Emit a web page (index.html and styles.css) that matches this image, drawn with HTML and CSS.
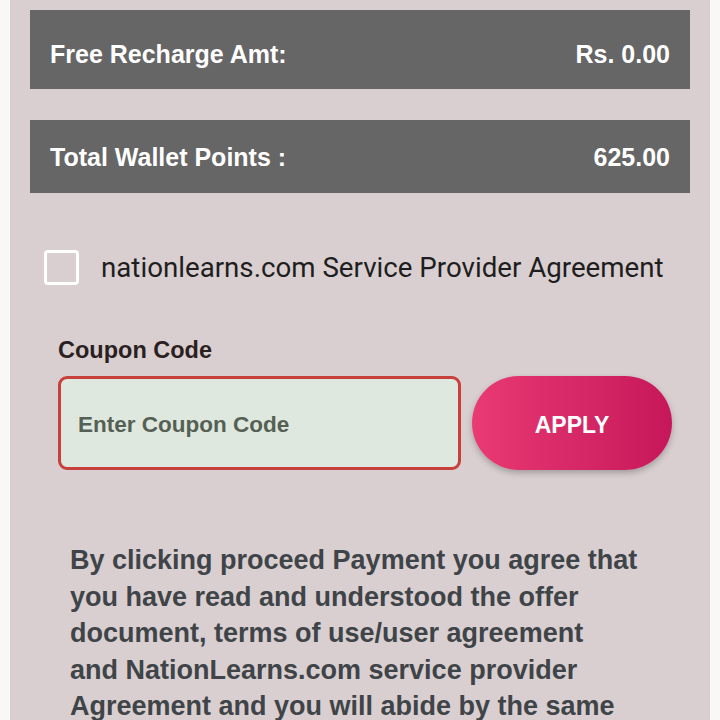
FILE: index.html
```html
<!DOCTYPE html>
<html>
<head>
<meta charset="utf-8">
<link rel="stylesheet" href="styles.css">
</head>
<body>
<div class="panel">
  <div class="bar bar-first">
    <span>Free Recharge Amt:</span>
    <span>Rs. 0.00</span>
  </div>
  <div class="bar bar-second">
    <span>Total Wallet Points :</span>
    <span>625.00</span>
  </div>
  <label class="agree">
    <span class="box"></span>
    <span class="agree-text">nationlearns.com Service Provider Agreement</span>
  </label>
  <div class="coupon">
    <div class="coupon-label">Coupon Code</div>
    <div class="coupon-row">
      <div class="coupon-input">Enter Coupon Code</div>
      <div class="apply">APPLY</div>
    </div>
  </div>
  <p class="terms">By clicking proceed Payment you agree that<br>you have read and understood the offer<br>document, terms of use/user agreement<br>and NationLearns.com service provider<br>Agreement and you will abide by the same</p>
</div>
</body>
</html>
```

FILE: styles.css
```css
html, body {
  margin: 0;
  padding: 0;
  background: #f8f8f8;
  height: 720px;
  overflow: hidden;
}
.panel {
  margin: 0 10px;
  background: #d9cfd0;
  height: 720px;
  padding: 10px 20px 0;
  box-sizing: border-box;
  font-family: "Liberation Sans", Arial, sans-serif;
  overflow: hidden;
}
.bar {
  background: #666666;
  color: #ffffff;
  display: flex;
  justify-content: space-between;
  align-items: center;
  padding: 0 20px;
  font-weight: bold;
  font-size: 25px;
  box-sizing: border-box;
}
.bar-first {
  height: 79px;
  padding-top: 9px;
}
.bar-second {
  height: 73px;
  margin-top: 31px;
  padding-top: 2px;
}
.agree {
  display: flex;
  align-items: center;
  margin-top: 57px;
  padding-left: 14px;
  gap: 22px;
}
.box {
  width: 29px;
  height: 29px;
  border: 3px solid #ffffff;
  border-radius: 4px;
  flex: none;
}
.agree-text {
  font-family: Roboto, "Liberation Sans", sans-serif;
  font-size: 27.7px;
  color: #1e1e1e;
  white-space: nowrap;
}
.coupon {
  margin-top: 50px;
  padding-left: 28px;
}
.coupon-label {
  font-weight: bold;
  font-size: 23.5px;
  color: #2b1f1f;
  line-height: 30px;
}
.coupon-row {
  display: flex;
  margin-top: 11px;
  gap: 11px;
}
.coupon-input {
  width: 403px;
  height: 94px;
  border: 3px solid #c8403c;
  border-radius: 9px;
  background: #dfe8df;
  color: #556055;
  font-weight: bold;
  font-size: 22.5px;
  display: flex;
  align-items: center;
  padding: 4px 0 0 17px;
  box-sizing: border-box;
}
.apply {
  width: 200px;
  height: 94px;
  border-radius: 47px;
  background: linear-gradient(90deg, #e93a74, #c6175a);
  box-shadow: 0 3px 6px rgba(0,0,0,0.25);
  color: #ffffff;
  font-weight: bold;
  font-size: 23px;
  display: flex;
  align-items: center;
  justify-content: center;
  padding-top: 4px;
  box-sizing: border-box;
}
.terms {
  margin: 72px 0 0 40px;
  font-weight: bold;
  font-size: 27px;
  line-height: 36.5px;
  color: #3f4448;
  white-space: nowrap;
}
```
